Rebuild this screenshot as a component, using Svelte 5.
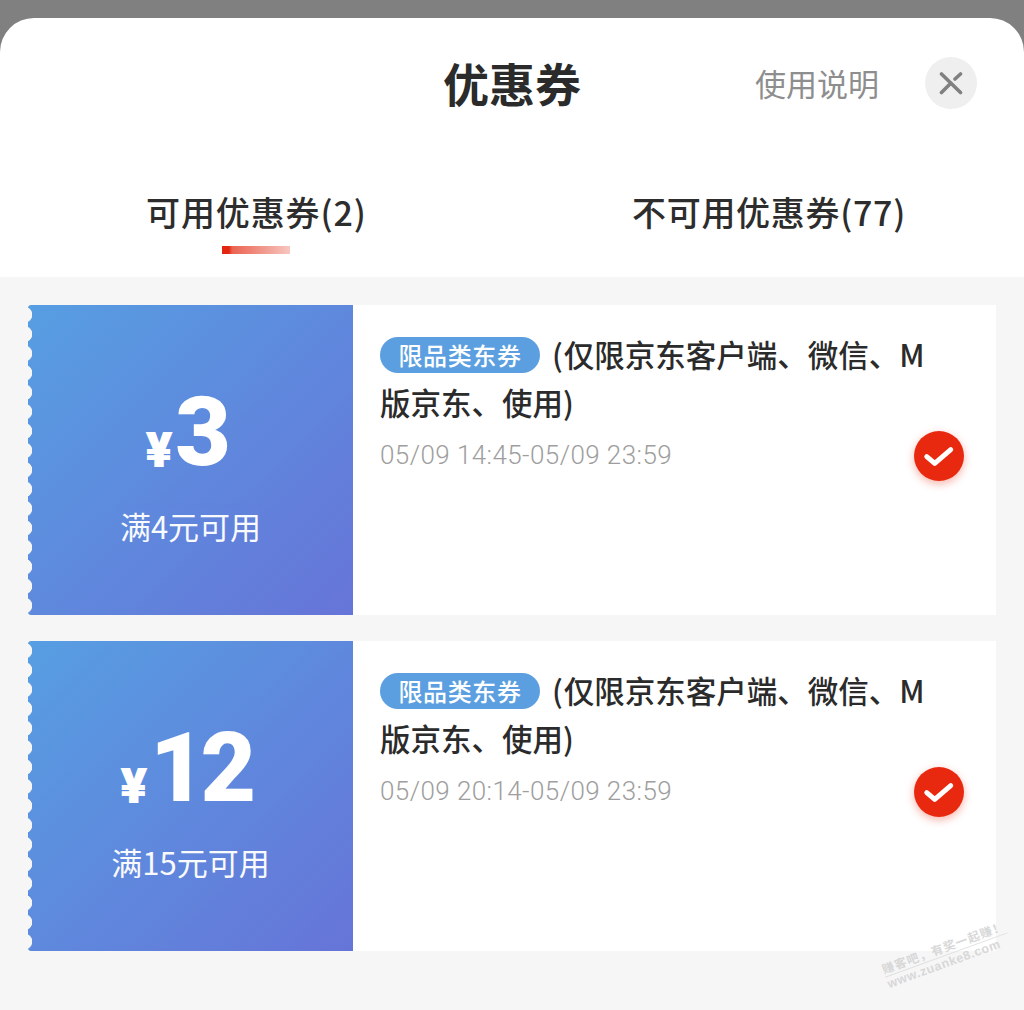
<script>
  const coupons = [
    { amount: '3', rule: '满4元可用', date: '05/09 14:45-05/09 23:59' },
    { amount: '12', rule: '满15元可用', date: '05/09 20:14-05/09 23:59' }
  ];
</script>

<div class="page">
  <div class="sheet">
    <header class="head">
      <h1>优惠券</h1>
      <span class="help">使用说明</span>
      <button class="close" aria-label="关闭">
        <svg viewBox="0 0 24 24" width="24" height="24"><path d="M2.5 3 21.5 21.5M21.5 3 16 8M12 12 2.5 21.5" stroke="#808080" stroke-width="3.6" stroke-linecap="round" fill="none"/></svg>
      </button>
    </header>
    <nav class="tabs">
      <div class="tab active">可用优惠券(2)<i></i></div>
      <div class="tab other">不可用优惠券(77)</div>
    </nav>
    <main class="list">
      {#each coupons as c}
        <article class="card">
          <div class="left">
            <div class="price"><span class="yen">¥</span><span class="num">{c.amount}</span></div>
            <div class="rule">{c.rule}</div>
          </div>
          <div class="right">
            <div class="title"><span class="tag">限品类东券</span><span class="paren">(</span>仅限京东客户端、微信、M版京东、使用)</div>
            <div class="date">{c.date}</div>
            <span class="check">
              <svg viewBox="0 0 30 24" width="32" height="26"><path d="M3.5 12.5 11 19 26 6" stroke="#fff" stroke-width="4.6" stroke-linecap="round" stroke-linejoin="round" fill="none"/></svg>
            </span>
          </div>
        </article>
      {/each}
    </main>
    <div class="mark">
      <div class="m1">赚客吧，有奖一起赚！</div>
      <div class="m2">www.zuanke8.com</div>
    </div>
  </div>
</div>

<style>
  :global(body) { margin: 0; background: #808080; }
  .page {
    width: 1024px; height: 1010px; overflow: hidden; padding-top: 18px; box-sizing: border-box;
    font-family: "Noto Sans CJK SC", "Noto Sans", sans-serif; background: #808080;
  }
  .sheet {
    position: relative; height: 992px; background: #fff; border-radius: 34px 34px 0 0; overflow: hidden;
    display: flex; flex-direction: column;
  }
  .head { position: relative; height: 134px; flex: none; }
  h1 {
    margin: 0; padding-top: 32px; text-align: center; font-size: 46px; line-height: 64px; font-weight: 700; color: #2b2b2b;
  }
  .help {
    position: absolute; left: 755px; top: 43px; font-size: 31px; line-height: 44px; color: #8e8e8e; white-space: nowrap;
  }
  .close {
    position: absolute; left: 925px; top: 39px; width: 52px; height: 52px; border: 0; padding: 0; border-radius: 50%;
    background: #efefef; display: flex; align-items: center; justify-content: center;
  }
  .tabs { position: relative; height: 125px; flex: none; }
  .tab { position: absolute; top: 35px; font-size: 34px; line-height: 50px; white-space: nowrap; color: #2d2d2d; letter-spacing: 0.9px; font-weight: 500; }
  .active { left: 146px; }
  .other { left: 632px; letter-spacing: .7px; }
  .active i {
    position: absolute; left: 76px; top: 59px; width: 68px; height: 8px;
    background: linear-gradient(90deg, #e3260f 0 10%, #ea6352 15%, #f7c7c0 100%);
  }
  .list {
    flex: 1; background: #f6f6f6; padding: 28px 28px 0; display: flex; flex-direction: column; gap: 26.5px;
  }
  .card { display: flex; height: 309.5px; background: #fff; flex: none; }
  .left {
    position: relative; width: 325px; flex: none; color: #fff; overflow: hidden; border-radius: 3px 0 0 3px;
    background: linear-gradient(135deg, #579ee2, #6674d8);
    display: flex; flex-direction: column; align-items: center; padding-top: 72px; box-sizing: border-box;
  }
  .left::before {
    content: ""; position: absolute; left: 0; top: 0; bottom: 0; width: 5px;
    background: radial-gradient(circle at -4px 9.7px, #f6f6f6 8px, transparent 8.5px) 0 0 / 5px 19.4px repeat-y;
  }
  .price { display: flex; align-items: baseline; height: 110px; line-height: 110px; margin-right: 10px; }
  .yen { font-family: Inter, sans-serif; font-size: 48px; font-weight: 900; margin-right: 2px; position: relative; top: 2px; }
  .num { font-family: Roboto, sans-serif; font-size: 96px; font-weight: 900; letter-spacing: -5px; }
  .rule { margin-top: 18px; font-size: 31px; line-height: 42px; margin-left: 0; opacity: .96; }
  .right { position: relative; flex: 1; padding: 25px 60px 0 27px; }
  .title { font-size: 30.5px; line-height: 48px; color: #2b2b2b; font-weight: 500; }
  .tag {
    display: inline-block; width: 160px; height: 36px; line-height: 36px; border-radius: 18px; background: #5b9fe0;
    color: #fff; font-size: 24px; text-align: center; vertical-align: 2px; letter-spacing: .6px;
  }
  .paren { margin-left: 12px; margin-right: 1px; }
  .date {
    margin-top: 7px; font-family: Roboto, sans-serif; font-size: 26px; line-height: 44px; color: #9e9e9e; white-space: nowrap; font-weight: 300; letter-spacing: .42px;
  }
  .check {
    position: absolute; left: 561px; top: 126px; width: 50px; height: 50px; border-radius: 50%; background: #e8290f;
    box-shadow: 0 3px 8px rgba(232, 41, 15, .35); display: flex; align-items: center; justify-content: center;
  }
  .mark {
    position: absolute; left: 890px; top: 944px; width: 130px; color: #d8d8d8; transform: rotate(-20deg); transform-origin: 0 100%; line-height: 1;
  }
  .m1 { font-size: 12px; font-weight: 700; letter-spacing: 1px; border-bottom: 1px solid #e0e0e0; padding-bottom: 2px; white-space: nowrap; }
  .m2 { font-family: "Liberation Sans", sans-serif; font-size: 12.5px; font-weight: 700; letter-spacing: .6px; padding-top: 1px; white-space: nowrap; }
</style>
